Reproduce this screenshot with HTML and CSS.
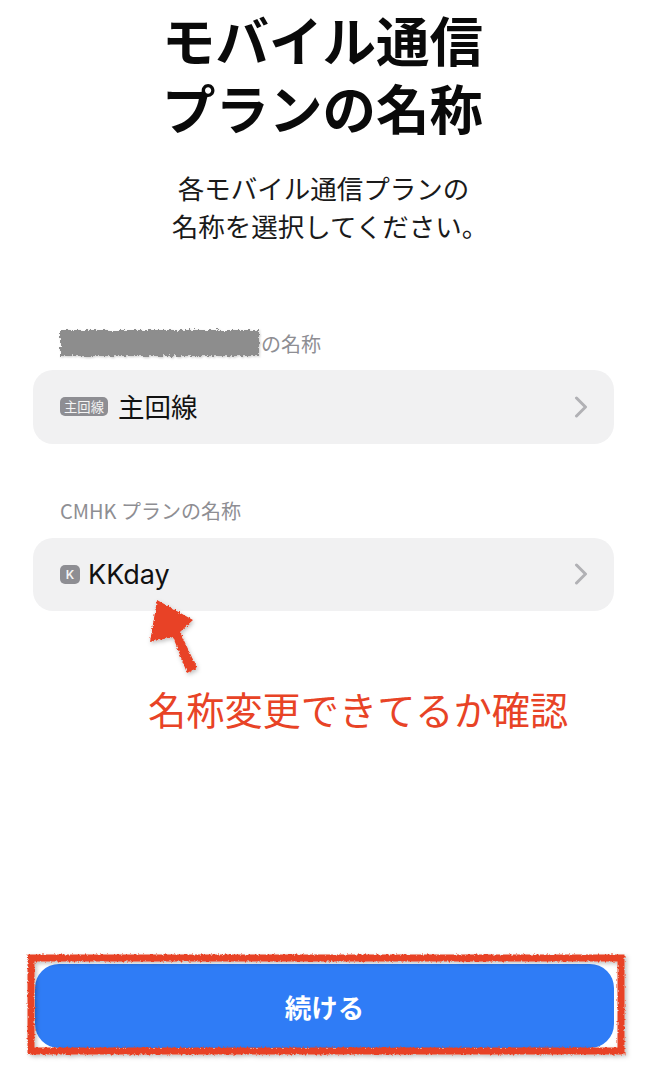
FILE: index.html
```html
<!DOCTYPE html>
<html lang="ja">
<head>
<meta charset="utf-8">
<title>モバイル通信プランの名称</title>
<link rel="stylesheet" href="styles.css">
</head>
<body>
<svg class="defs" width="0" height="0" aria-hidden="true">
  <filter id="rough" x="-5%" y="-20%" width="110%" height="140%">
    <feTurbulence type="fractalNoise" baseFrequency="0.45" numOctaves="2" seed="4"/>
    <feDisplacementMap in="SourceGraphic" scale="3.5" xChannelSelector="R" yChannelSelector="G"/>
    <feGaussianBlur stdDeviation="0.5"/>
  </filter>
  <filter id="rougher" x="-5%" y="-30%" width="110%" height="160%">
    <feTurbulence type="fractalNoise" baseFrequency="0.35" numOctaves="2" seed="9"/>
    <feDisplacementMap in="SourceGraphic" scale="6" xChannelSelector="R" yChannelSelector="G"/>
    <feGaussianBlur stdDeviation="0.6"/>
  </filter>
</svg>
<main class="page">
  <h1 class="title">モバイル通信<br>プランの名称</h1>
  <p class="lead">各モバイル通信プランの<br>名称を選択してください<span class="maru">。</span></p>
  <section class="plan plan-first">
    <div class="label"><span class="redact"></span>の名称</div>
    <div class="row">
      <span class="badge badge-wide">主回線</span>
      <span class="name name-cjk">主回線</span>
      <svg class="chev" viewBox="0 0 14 22"><path d="M2.5 2 L11.5 11 L2.5 20"/></svg>
    </div>
  </section>
  <section class="plan plan-second">
    <div class="label">CMHK プランの名称</div>
    <div class="row">
      <span class="badge badge-square">K</span>
      <span class="name name-latin">KKday</span>
      <svg class="chev" viewBox="0 0 14 22"><path d="M2.5 2 L11.5 11 L2.5 20"/></svg>
    </div>
    <svg class="arrow" viewBox="0 0 50 80" width="50" height="80"><path class="arrow-shape" d="M9 5 L45 25 L32 37 L49 73 L39 78 L25 42 L2 47 Z"/></svg>
  </section>
  <p class="note">名称変更できてるか確認</p>
  <div class="footer">
    <button class="cta">続ける</button>
    <svg class="frame" viewBox="0 0 598 101" width="598" height="101"><rect x="4" y="4" width="590" height="93"/></svg>
  </div>
</main>
</body>
</html>
```
FILE: styles.css
```css
* { box-sizing: border-box; }
html, body { margin: 0; padding: 0; background: #fff; }
body { font-family: "Noto Sans CJK JP", Inter, "Noto Sans", sans-serif; color: #111; }
.defs { position: absolute; }
.page { width: 652px; height: 1067px; display: flex; flex-direction: column; padding: 5px 38px 0 33px; overflow: hidden; }
.title { margin: 0 0 0 -2px; font-size: 53.5px; line-height: 68px; font-weight: 700; text-align: center; color: #0a0a0a; white-space: nowrap; }
.lead { margin: 28px 0 0; font-size: 26.5px; line-height: 38px; text-align: center; color: #1a1a1a; white-space: nowrap; }
.maru { letter-spacing: -13px; }
.plan { position: relative; }
.plan-first { margin-top: 84px; }
.plan-second { margin-top: 53px; }
.label { height: 28px; margin-left: 27px; display: flex; align-items: center; font-size: 20px; color: #8e8e93; white-space: nowrap; }
.redact { width: 199px; height: 26px; margin-right: 2px; background: #8d8d8d; filter: url(#rougher) drop-shadow(1px 1px 1px rgba(0,0,0,.2)); }
.row { height: 73.5px; margin-top: 13px; background: #f1f1f2; border-radius: 20px; display: flex; align-items: center; padding: 0 26px 0 27px; }
.badge { display: flex; align-items: center; justify-content: center; background: #8e8e93; color: #f4f4f4; border-radius: 5px; height: 19px; font-size: 13.3px; }
.badge-wide { width: 48px; }
.badge-square { width: 20px; font-family: Inter, sans-serif; font-size: 12px; font-weight: 600; }
.name { margin-left: 8px; font-size: 26.5px; color: #111; flex: 1; }
.name-cjk { margin-left: 10px; padding-bottom: 3px; }
.name-latin { font-family: Inter, sans-serif; font-size: 27px; }
.chev { width: 14px; height: 22px; fill: none; stroke: #b1b1b5; stroke-width: 3; stroke-linecap: round; stroke-linejoin: round; }
.arrow { position: absolute; left: 115px; top: 98px; filter: url(#rough) drop-shadow(1px 2px 2px rgba(0,0,0,.25)); overflow: visible; }
.arrow-shape { fill: #e84326; }
.note { margin: 73px 0 0 115px; font-size: 38.2px; line-height: 50px; color: #e84326; white-space: nowrap; }
.footer { position: relative; margin-top: auto; margin-bottom: 19px; height: 84px; margin-left: 2px; }
.cta { display: block; width: 579px; height: 84px; border: 0; border-radius: 24px; background: #2f7cf6; color: #fff; font: 700 26.5px "Noto Sans CJK JP", sans-serif; }
.frame { position: absolute; left: -8px; top: -10px; overflow: visible; filter: url(#rough) drop-shadow(2px 2px 2px rgba(0,0,0,.25)); }
.frame rect { fill: none; stroke: #e84326; stroke-width: 7; }
```
